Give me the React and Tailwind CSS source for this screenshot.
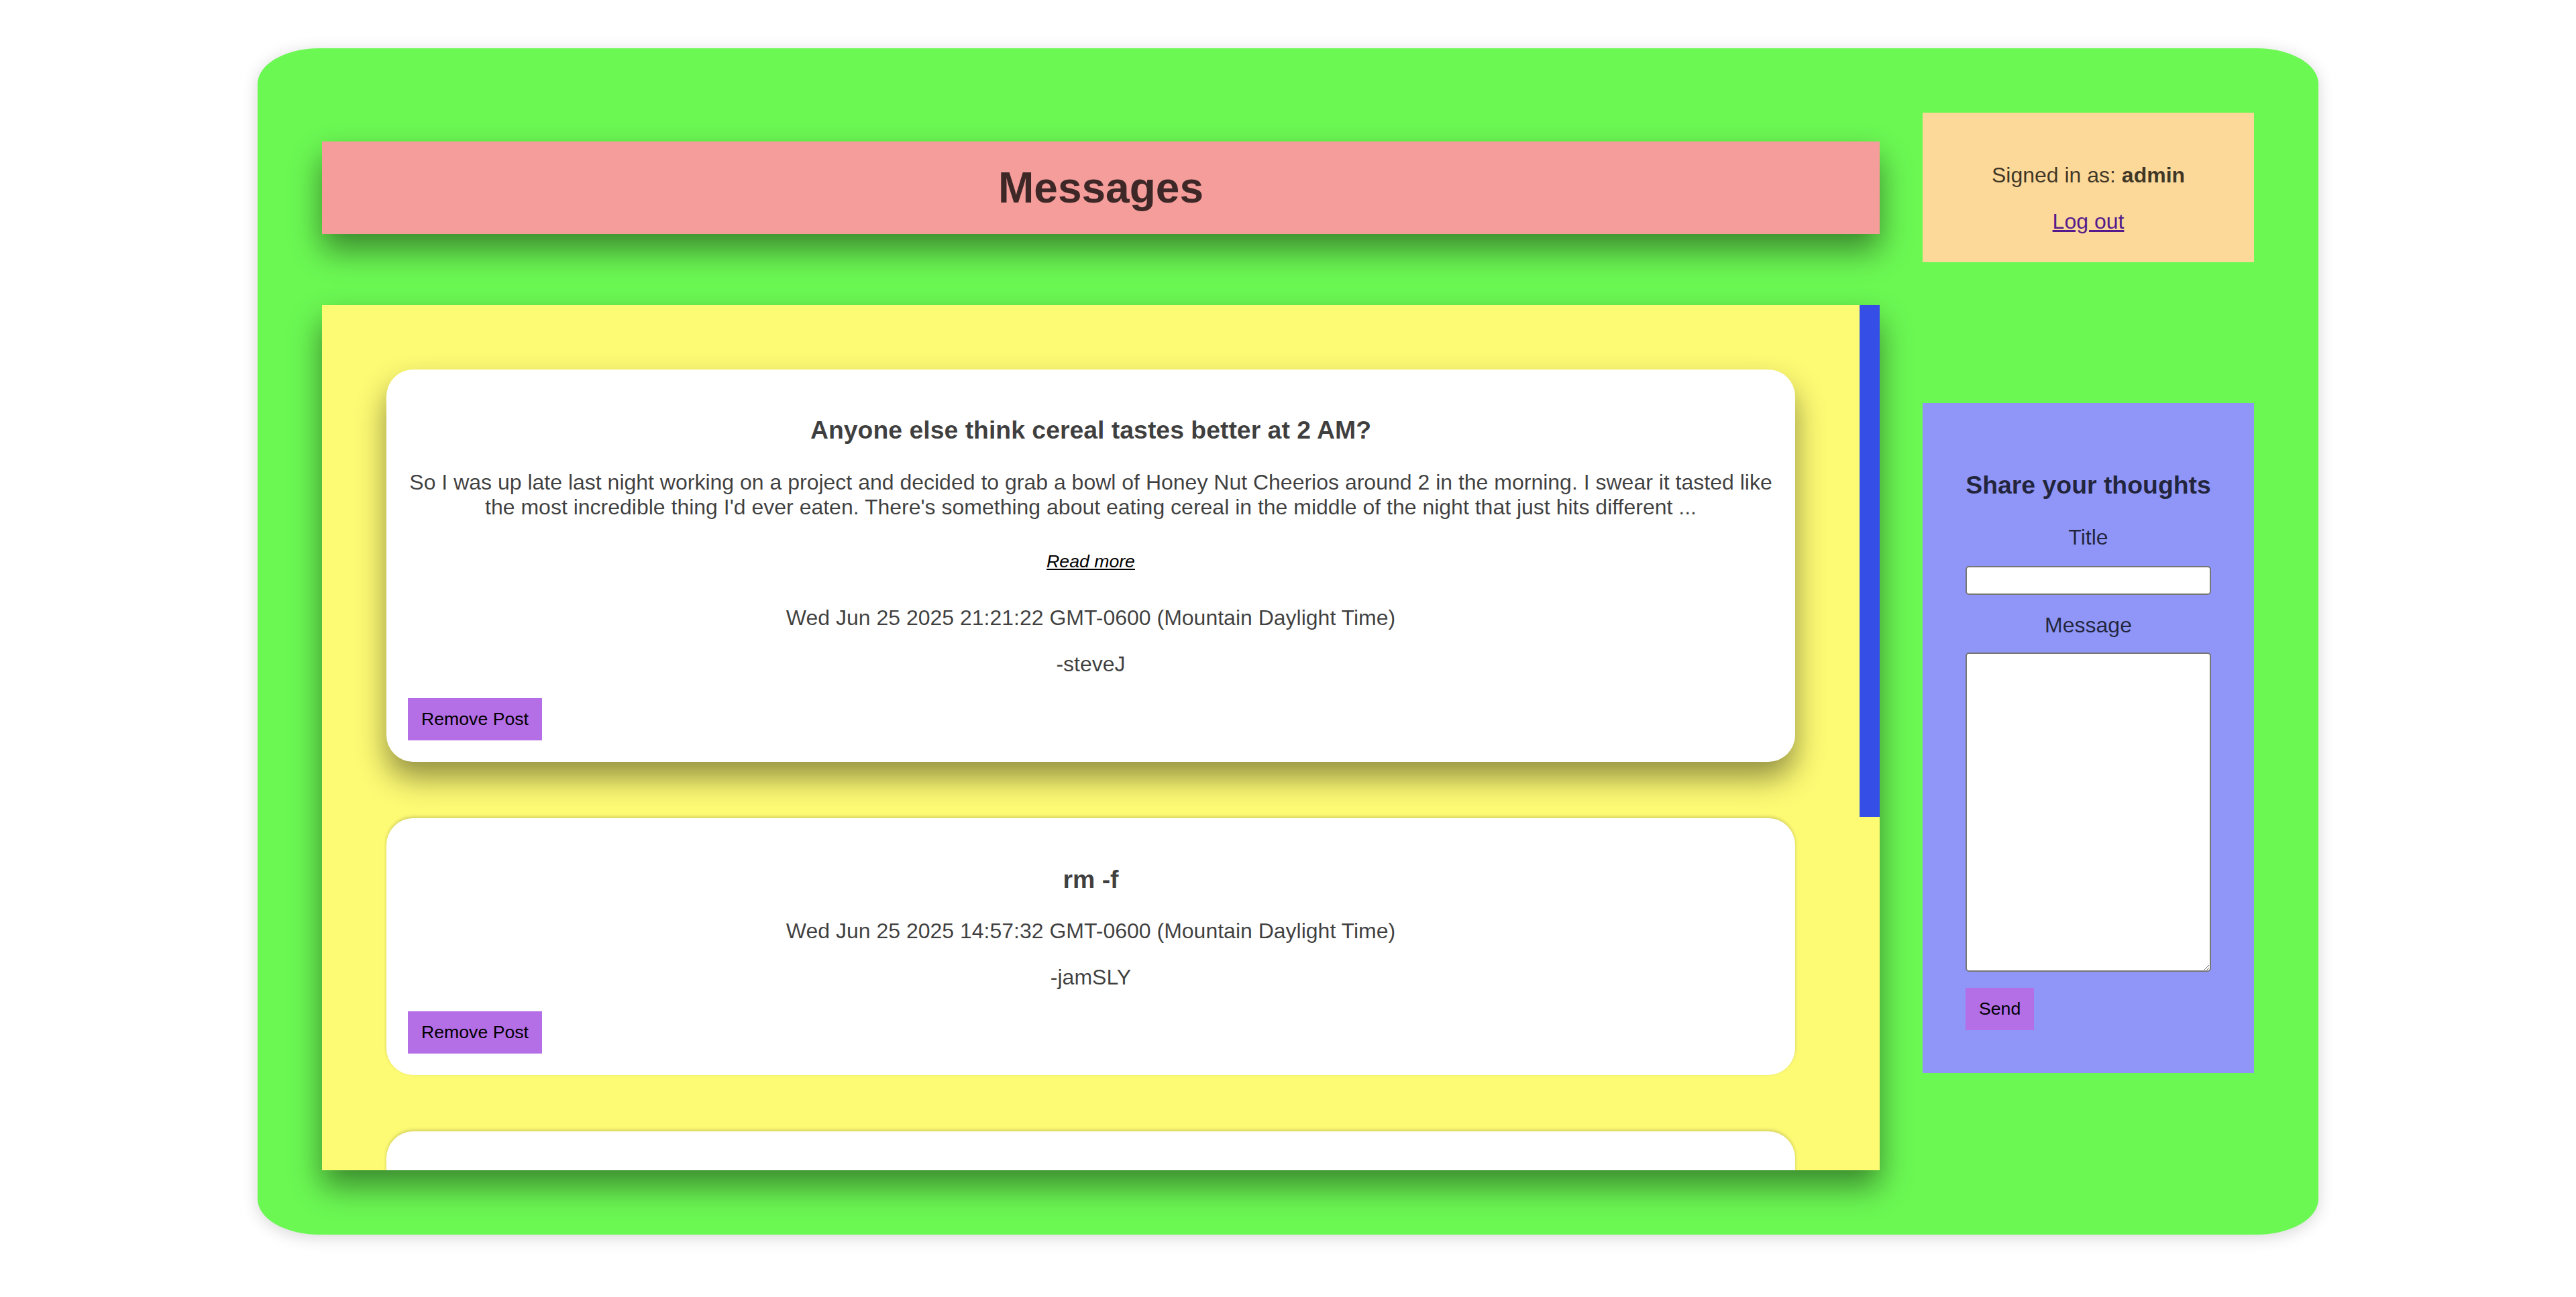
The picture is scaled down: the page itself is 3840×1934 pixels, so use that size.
import React from 'react';

// Posts shown in the message board
const posts = [
  {
    id: 1,
    title: 'Anyone else think cereal tastes better at 2 AM?',
    body: [
      'So I was up late last night working on a project and decided to grab a bowl of Honey Nut Cheerios around 2 in the morning. I swear it tasted like',
      "the most incredible thing I'd ever eaten. There's something about eating cereal in the middle of the night that just hits different ...",
    ],
    date: 'Wed Jun 25 2025 21:21:22 GMT-0600 (Mountain Daylight Time)',
    author: 'steveJ',
  },
  {
    id: 2,
    title: 'rm -f',
    body: null,
    date: 'Wed Jun 25 2025 14:57:32 GMT-0600 (Mountain Daylight Time)',
    author: 'jamSLY',
  },
];

const PostCard = ({ post, active, first }) => {
  return (
    <div
      className={`bg-white rounded-[40px] px-[32px] pt-[32px] pb-[32px] text-center text-black/75 ${
        first ? '' : 'mt-[84px]'
      } ${
        active
          ? 'shadow-[0_24px_44px_rgba(0,0,0,0.42)]'
          : 'shadow-[0_-2px_5px_rgba(0,0,0,0.18)]'
      }`}
    >
      <h3 className="mt-[37.4px] text-[37.4px] leading-[43px] font-bold">{post.title}</h3>

      {post.body && (
        <>
          <p className="mt-[37.4px] text-[32px] leading-[36.8px]">
            {post.body[0]}
            <br />
            {post.body[1]}
          </p>
          <a href="#" className="block mt-[48px] text-[26.67px] leading-[31px] italic underline text-black">
            Read more
          </a>
        </>
      )}

      <p className={`${post.body ? 'mt-[50px]' : 'mt-[37.4px]'} text-[32px] leading-[37px]`}>{post.date}</p>
      <p className="mt-[32px] text-[32px] leading-[37px]">-{post.author}</p>

      <div className="mt-[32px] flex">
        <button className="bg-[#b46ee6] text-black text-[26.67px] leading-[31px] px-[20px] py-[16px]">
          Remove Post
        </button>
      </div>
    </div>
  );
};

const App = () => {
  return (
    <div
      className="min-h-[1934px] bg-white pt-[72px] leading-[normal]"
      style={{ fontFamily: '"Liberation Sans", Arial, Helvetica, sans-serif' }}
    >
      <div className="mx-auto w-[3072px] rounded-[3%] bg-[#6bf853] p-[96px] flex gap-[64px] shadow-[0_4px_24px_rgba(0,0,0,0.16)]">
        {/* Left column: header + posts */}
        <div className="flex-1">
          <h1 className="mt-[43px] bg-[#f49d9a] py-[32px] text-center text-[64px] leading-[74px] font-bold text-black/75 shadow-[0_24px_44px_rgba(0,0,0,0.45)]">
            Messages
          </h1>

          <div className="relative mt-[106px] h-[1290px] overflow-hidden bg-[#fdfa74] shadow-[0_24px_44px_rgba(0,0,0,0.45)]">
            <div className="pl-[96px] pr-[126px] pt-[96px]">
              {posts.map((post, index) => (
                <PostCard key={post.id} post={post} active={index === 0} first={index === 0} />
              ))}
              {/* next post, scrolled out of view */}
              <div className="mt-[84px] h-[384px] bg-white rounded-[40px] shadow-[0_-2px_5px_rgba(0,0,0,0.18)]"></div>
            </div>
            {/* scrollbar thumb */}
            <div className="absolute right-0 top-0 w-[30px] h-[763px] bg-[#354ee6]"></div>
          </div>
        </div>

        {/* Right column: account + form */}
        <div className="w-[494px]">
          <div className="bg-[#fcd899] pt-[75px] pb-[42px] text-center text-[32px] leading-[37px] text-black/75">
            <p>
              Signed in as: <b>admin</b>
            </p>
            <p className="mt-[32px]">
              <a href="#" className="underline text-[#551a8b]">Log out</a>
            </p>
          </div>

          <form className="mt-[210px] bg-[#8f96f7] p-[64px] text-black/75" onSubmit={(e) => e.preventDefault()}>
            <h3 className="mt-[37.4px] mb-[37.4px] text-center text-[37.4px] leading-[43px] font-bold">
              Share your thoughts
            </h3>
            <label className="block text-center text-[32px] leading-[37px] mb-[24px]">Title</label>
            <input
              type="text"
              className="block w-full h-[43px] border-2 border-[#767676] rounded-[5px] bg-white mb-[27px]"
            />
            <label className="block text-center text-[32px] leading-[37px] mb-[22px]">Message</label>
            <textarea className="block w-full h-[476px] border-2 border-[#767676] rounded-[5px] bg-white mb-[24px]"></textarea>
            <button type="submit" className="block bg-[#b46ee6] text-black text-[26.67px] leading-[31px] px-[20px] py-[16px]">
              Send
            </button>
          </form>
        </div>
      </div>
    </div>
  );
};

export default App;
